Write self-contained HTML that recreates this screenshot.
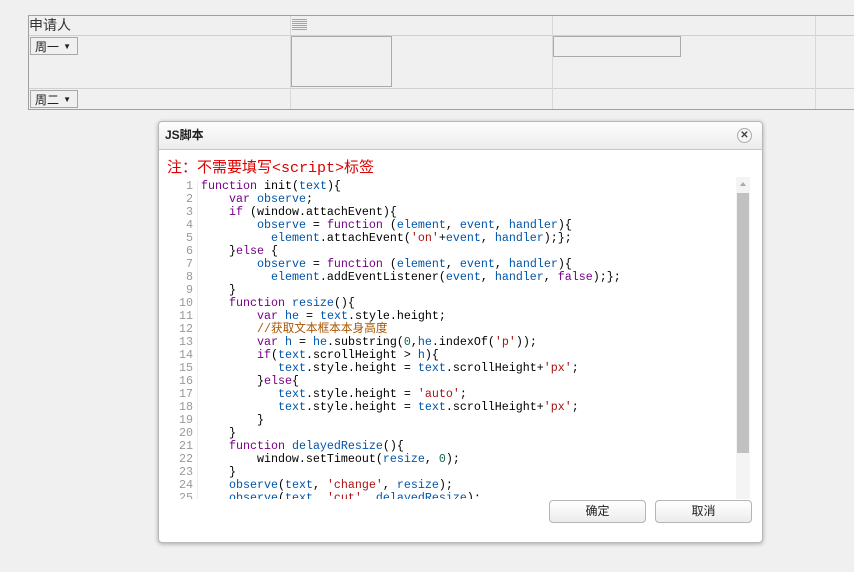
<!DOCTYPE html>
<html><head><meta charset="utf-8"><style>
body{margin:0;width:854px;height:572px;background:#f0f0f0;font-family:"Liberation Sans","Noto Sans CJK SC",sans-serif;position:relative;overflow:hidden}
.tbl{position:absolute;left:28px;top:15px;width:840px;height:93px;border:1px solid #a0a0a0;border-right:none}
.h{position:absolute;left:0;right:0;height:1px;background:#d0d0d0}
.v{position:absolute;top:0;bottom:0;width:1px;background:#d8d8d8}
.sel{position:absolute;height:18px;border:1px solid #a8a8a8;font-size:12px;line-height:18px;padding-left:4px;box-sizing:border-box;width:48px;background:#f0f0f0;color:#222}
.sel:after{content:"▼";font-size:8px;position:absolute;right:6px;top:0}
.dlg{position:absolute;left:158px;top:121px;width:603px;height:420px;background:#fff;border:1px solid #b8b8b8;border-radius:4px;box-shadow:0 1px 4px rgba(0,0,0,.3)}
.hd{height:27px;border-bottom:1px solid #c8c8c8;background:linear-gradient(#fdfdfd,#ececec);border-radius:4px 4px 0 0;font-size:12px;font-weight:bold;line-height:27px;padding-left:6px;color:#222}
.x{position:absolute;right:10px;top:6px;width:13px;height:13px;border:1px solid #aaa;border-radius:50%;font-size:10px;line-height:13px;text-align:center;font-weight:bold;background:#f6f6f6;color:#444}
.note{position:absolute;left:8px;top:34px;color:#d00;font-size:15px;font-family:"Liberation Mono","Noto Sans CJK SC",monospace}
.code{position:absolute;left:8px;top:55px;width:569px;height:322px;overflow:hidden;font-family:"Liberation Mono","Noto Sans CJK SC",monospace;font-size:11.67px;line-height:13px}
.gut{position:absolute;left:0;top:3px;width:26px;text-align:right;color:#999;border-right:1px solid #eee;padding-right:4px;white-space:pre}
.src{position:absolute;left:34px;top:3px;white-space:pre;color:#000}
.k{color:#708}.d{color:#05a}.s{color:#a11}.c{color:#a50}.n{color:#164}
.sb{position:absolute;left:577px;top:55px;width:14px;height:322px;background:#f4f4f4}
.th{position:absolute;left:1px;top:16px;width:12px;height:260px;background:#c1c1c1}
.btn{position:absolute;top:378px;width:95px;height:21px;border:1px solid #b5b5b5;border-radius:4px;background:linear-gradient(#fff,#ececec);font-size:12px;text-align:center;line-height:21px;color:#222}
</style></head><body>
<div class="tbl">
<div class="h" style="top:19px"></div><div class="h" style="top:72px"></div>
<div class="v" style="left:261px"></div><div class="v" style="left:523px"></div><div class="v" style="left:786px"></div>
<div style="position:absolute;left:0;top:0;font-size:14px;line-height:18px;color:#333">申请人</div>
<div style="position:absolute;left:263px;top:3px;width:15px;height:12px;background:repeating-linear-gradient(#9aa4b8 0 1px,transparent 1px 2px)"></div>
<div class="sel" style="left:1px;top:21px">周一</div>
<div class="sel" style="left:1px;top:74px">周二</div>
<div style="position:absolute;left:262px;top:20px;width:101px;height:51px;border:1px solid #aaa;box-sizing:border-box"></div>
<div style="position:absolute;left:524px;top:20px;width:128px;height:21px;border:1px solid #aaa;box-sizing:border-box"></div>
</div>
<div class="dlg">
<div class="hd">JS脚本</div><div class="x">✕</div>
<div class="note">注：不需要填写&lt;script&gt;标签</div>
<div class="code">
<div class="gut">1
2
3
4
5
6
7
8
9
10
11
12
13
14
15
16
17
18
19
20
21
22
23
24
25</div>
<div class="src"><span class="k">function</span> init(<span class="d">text</span>){
    <span class="k">var</span> <span class="d">observe</span>;
    <span class="k">if</span> (window.attachEvent){
        <span class="d">observe</span> = <span class="k">function</span> (<span class="d">element</span>, <span class="d">event</span>, <span class="d">handler</span>){
          <span class="d">element</span>.attachEvent(<span class="s">'on'</span>+<span class="d">event</span>, <span class="d">handler</span>);};
    }<span class="k">else</span> {
        <span class="d">observe</span> = <span class="k">function</span> (<span class="d">element</span>, <span class="d">event</span>, <span class="d">handler</span>){
          <span class="d">element</span>.addEventListener(<span class="d">event</span>, <span class="d">handler</span>, <span class="k">false</span>);};
    }
    <span class="k">function</span> <span class="d">resize</span>(){
        <span class="k">var</span> <span class="d">he</span> = <span class="d">text</span>.style.height;
        <span class="c">//获取文本框本本身高度</span>
        <span class="k">var</span> <span class="d">h</span> = <span class="d">he</span>.substring(<span class="n">0</span>,<span class="d">he</span>.indexOf(<span class="s">'p'</span>));
        <span class="k">if</span>(<span class="d">text</span>.scrollHeight &gt; <span class="d">h</span>){
           <span class="d">text</span>.style.height = <span class="d">text</span>.scrollHeight+<span class="s">'px'</span>;
        }<span class="k">else</span>{
           <span class="d">text</span>.style.height = <span class="s">'auto'</span>;
           <span class="d">text</span>.style.height = <span class="d">text</span>.scrollHeight+<span class="s">'px'</span>;
        }
    }
    <span class="k">function</span> <span class="d">delayedResize</span>(){
        window.setTimeout(<span class="d">resize</span>, <span class="n">0</span>);
    }
    <span class="d">observe</span>(<span class="d">text</span>, <span class="s">'change'</span>, <span class="d">resize</span>);
    <span class="d">observe</span>(<span class="d">text</span>, <span class="s">'cut'</span>, <span class="d">delayedResize</span>);</div>
</div>
<div class="sb"><div style="position:absolute;left:4px;top:5px;border:3px solid transparent;border-bottom:4px solid #aaa;border-top:none"></div><div class="th"></div></div>
<div class="btn" style="left:390px">确定</div>
<div class="btn" style="left:496px">取消</div>
</div>
</body></html>
